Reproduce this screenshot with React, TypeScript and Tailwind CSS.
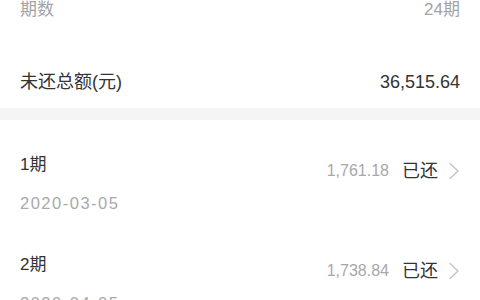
const font = { fontFamily: '"Liberation Sans", "Noto Sans CJK SC", sans-serif' };

type Installment = {
  period: string;
  date: string;
  amount: string;
  status: string;
};

const installments: Installment[] = [
  { period: '1期', date: '2020-03-05', amount: '1,761.18', status: '已还' },
  { period: '2期', date: '2020-04-05', amount: '1,738.84', status: '已还' },
];

function Chevron() {
  return (
    <svg width="12" height="18" viewBox="0 0 12 18" fill="none" className="ml-[10px]">
      <polyline points="2,1.5 10,9 2,16.5" stroke="#c4c4c4" strokeWidth="1.4" strokeLinecap="round" strokeLinejoin="round" />
    </svg>
  );
}

export default function App() {
  return (
    <div className="w-[480px] h-[300px] overflow-hidden bg-white" style={font}>
      <div className="px-5 pb-4">
        <div className="flex h-[20px] items-center justify-between text-[17px] text-[#a3a3a3]">
          <span>期数</span>
          <span>24期</span>
        </div>
        <div className="mt-[52px] flex h-[20px] items-center justify-between text-[18px] text-[#333333]">
          <span>未还总额(元)</span>
          <span>36,515.64</span>
        </div>
      </div>

      <div className="h-[12px] bg-[#f5f5f5]" />

      {installments.map((item) => (
        <div key={item.period} className="flex items-start justify-between px-5 pt-[33px] pb-[7px]">
          <div className="flex flex-col">
            <div className="flex h-[24px] items-center text-[17px] text-[#333333]">{item.period}</div>
            <div className="mt-[16px] flex h-[20px] items-center text-[16.5px] tracking-[1.5px] text-[#aaaaaa]">
              {item.date}
            </div>
          </div>
          <div className="mt-[6px] flex h-[24px] items-center">
            <span className="text-[16px] text-[#a8a8a8]">{item.amount}</span>
            <span className="ml-[13px] text-[18px] text-[#333333]">{item.status}</span>
            <Chevron />
          </div>
        </div>
      ))}
    </div>
  );
}
